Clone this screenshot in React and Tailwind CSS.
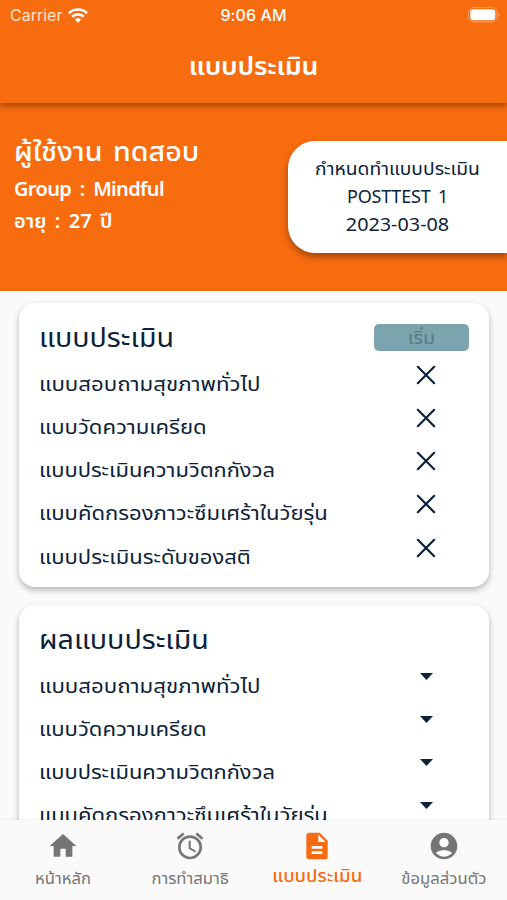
import { MdHome, MdAccessAlarm, MdDescription, MdAccountCircle } from "react-icons/md";

const ASSESSMENTS = [
  { name: "แบบสอบถามสุขภาพทั่วไป", fit: "scale-x-[1.112]" },
  { name: "แบบวัดความเครียด", fit: "scale-x-[1.103]" },
  { name: "แบบประเมินความวิตกกังวล", fit: "scale-x-[1.095]" },
  { name: "แบบคัดกรองภาวะซึมเศร้าในวัยรุ่น", fit: "scale-x-[1.103]" },
  { name: "แบบประเมินระดับของสติ", fit: "scale-x-[1.1]" },
];

function CrossIcon() {
  return (
    <svg viewBox="0 0 20 20" className="size-5" fill="none" stroke="#0b2239" strokeWidth="2.2" strokeLinecap="round">
      <path d="M1.8 1.8 18.2 18.2M18.2 1.8 1.8 18.2" />
    </svg>
  );
}

function CaretIcon() {
  return (
    <svg viewBox="0 0 13 7" className="h-[7px] w-[13px]" fill="#0b2239">
      <path d="M0 0h13L6.5 7z" />
    </svg>
  );
}

function StatusBar() {
  return (
    <div className="grid h-[30px] grid-cols-3 items-center font-['Inter','Liberation_Sans',sans-serif] text-[16px] text-white">
      <div className="flex items-center gap-[6px] pl-[10px] text-[#ffe3cf]">
        <span>Carrier</span>
        <svg viewBox="0 0 20 15" className="h-[15px] w-5" fill="none" stroke="#fff" strokeWidth="2.7">
          <path d="M.9 5.2a13 13 0 0 1 18.2 0M4.1 8.7a8.4 8.4 0 0 1 11.8 0" />
          <path d="M10 14.8 6.8 11.6a4.6 4.6 0 0 1 6.4 0z" fill="#fff" stroke="none" />
        </svg>
      </div>
      <span className="text-center font-medium tracking-[0.1px]">9:06 AM</span>
      <svg viewBox="0 0 32 16" className="mr-[7px] h-4 w-8 justify-self-end" fill="none">
        <rect x=".5" y=".5" width="28.5" height="14.5" rx="4.5" stroke="#fb9a5c" />
        <rect x="2.3" y="2.3" width="25" height="11" rx="2.8" fill="#fff" />
        <path d="M30.2 5.5c1.8.8 1.8 3.8 0 4.6z" fill="#fb9a5c" />
      </svg>
    </div>
  );
}

function Card({ title, action, marker, markerTop }) {
  return (
    <section className="h-[284px] shrink-0 rounded-[16px] bg-white pl-5 pr-[20px] pt-[14px] shadow-[0_3px_6px_rgba(0,0,0,0.28)]">
      <div className="flex h-[42px] items-center justify-between pb-[1px]">
        <h2 className="mb-[1px] origin-left scale-x-[1.06] whitespace-nowrap text-[27px] leading-[38px]">{title}</h2>
        {action}
      </div>
      {ASSESSMENTS.map((a) => (
        <div key={a.name} className="flex h-[43.15px] items-start justify-between">
          <span className={"origin-left whitespace-nowrap pt-[5px] text-[20px] leading-[39px] " + a.fit}>{a.name}</span>
          <span className={"flex w-[86px] justify-center " + markerTop}>{marker}</span>
        </div>
      ))}
    </section>
  );
}

function NavItem({ Icon, label, active }) {
  return (
    <div className={"flex flex-1 flex-col items-center pt-[10px] " + (active ? "text-[#f76b10]" : "text-[#757575]")}>
      <Icon className="size-[32px]" />
      <span className={"scale-x-[1.04] whitespace-nowrap " + (active ? "text-[18px] font-medium leading-[27px]" : "pt-[2px] text-[16px] leading-[28px]")}>{label}</span>
    </div>
  );
}

export default function App() {
  return (
    <div className="flex h-[900px] w-[507px] flex-col overflow-hidden bg-[#fafafa] font-['Noto_Sans','Noto_Sans_Thai',sans-serif] text-[#0b2239]">
      <header className="z-10 h-[103px] shrink-0 bg-[#f86c10] shadow-[0_3px_6px_rgba(0,0,0,0.35)]">
        <StatusBar />
        <h1 className="scale-x-[1.067] pt-[15px] text-center text-[25px] font-semibold leading-[40px] tracking-[-0.2px] text-white">แบบประเมิน</h1>
      </header>
      <div className="flex h-[188px] shrink-0 justify-between bg-[#f86c10]">
        <div className="whitespace-nowrap pl-[14px] pt-[28px] font-medium text-white">
          <p className="origin-left scale-x-[1.06] text-[27px] leading-[40px] [word-spacing:3px]">ผู้ใช้งาน ทดสอบ</p>
          <p className="text-[20px] font-semibold leading-[35px] tracking-[-0.65px] [word-spacing:4px]">Group : Mindful</p>
          <p className="text-[20px] font-semibold leading-[30px] [word-spacing:3.2px]">อายุ : 27 ปี</p>
        </div>
        <div className="mt-[38px] h-[112px] w-[219px] rounded-l-[27px] bg-white pt-[13px] text-center text-[18px] leading-[28px] shadow-[0_4px_7px_rgba(0,0,0,0.35)]">
          <p className="scale-x-[1.07]">กำหนดทำแบบประเมิน</p>
          <p className="tracking-[-0.2px] [word-spacing:3px]">POSTTEST 1</p>
          <p className="scale-x-[1.1]">2023-03-08</p>
        </div>
      </div>
      <main className="flex min-h-0 flex-1 flex-col gap-[18px] overflow-hidden pl-[19px] pr-[18px] pt-3">
        <Card
          title="แบบประเมิน"
          action={<button className="h-[27px] w-[95px] rounded-[5px] bg-[#7ba4ae] text-[18px] leading-[27px] text-[#587b85]"><span className="inline-block scale-x-[1.1]">เริ่ม</span></button>}
          marker={<CrossIcon />}
          markerTop="pt-[6px]"
        />
        <Card title="ผลแบบประเมิน" marker={<CaretIcon />} markerTop="pt-[12px]" />
      </main>
      <nav className="z-10 flex h-[80px] shrink-0 bg-[#fafafa] shadow-[0_-1px_2px_rgba(0,0,0,0.06)]">
        <NavItem Icon={MdHome} label="หน้าหลัก" />
        <NavItem Icon={MdAccessAlarm} label="การทำสมาธิ" />
        <NavItem Icon={MdDescription} label="แบบประเมิน" active />
        <NavItem Icon={MdAccountCircle} label="ข้อมูลส่วนตัว" />
      </nav>
    </div>
  );
}
